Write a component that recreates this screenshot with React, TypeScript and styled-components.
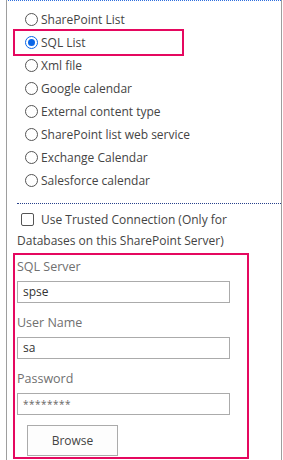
import React from 'react';
import styled, { createGlobalStyle } from 'styled-components';

const GlobalStyle = createGlobalStyle`
  html, body {
    margin: 0;
    padding: 0;
    background: #ffffff;
  }
  body {
    font-family: "Open Sans", "Noto Sans", sans-serif;
    font-size: 12px;
    color: #444444;
  }
`;

const Panel = styled.div`
  margin-left: 6px;
  width: 274px;
  height: 460px;
  overflow: hidden;
  border-left: 1px solid #9e9e9e;
  border-right: 1px solid #9e9e9e;
`;

const SourceList = styled.div`
  margin-left: 1px;
  border-top: 1px dotted #2f6fde;
  padding: 7px 0 11px 0;
  display: flex;
  flex-direction: column;
`;

const RadioRow = styled.label<{ $on?: boolean }>`
  display: flex;
  align-items: center;
  height: 23px;
  width: 167px;
  margin-left: 7px;
  padding-left: 10px;
  box-sizing: border-box;
  gap: 3px;
  white-space: nowrap;
  outline: ${p => (p.$on ? '2px solid #e5085f' : 'none')};
`;

const Radio = styled.span<{ $checked?: boolean }>`
  width: 11px;
  height: 11px;
  border: 1px solid ${p => (p.$checked ? '#0a66e8' : '#555555')};
  border-radius: 50%;
  display: flex;
  align-items: center;
  justify-content: center;
  flex: none;

  &::after {
    content: '';
    width: 7px;
    height: 7px;
    border-radius: 50%;
    background: ${p => (p.$checked ? '#0a66e8' : 'transparent')};
  }
`;

const Options = styled.div`
  margin-left: 10px;
  border-top: 1px dotted #27408b;
  padding-top: 5px;
  display: flex;
  flex-direction: column;
`;

const TrustedRow = styled.label`
  display: block;
  line-height: 21px;
`;

const Checkbox = styled.span`
  display: inline-block;
  width: 11px;
  height: 11px;
  border: 1px solid #555555;
  border-radius: 2px;
  vertical-align: -2px;
  margin: 0 7px 0 4px;
`;

const Credentials = styled.div`
  margin: 2px 0 0 -4px;
  width: 236px;
  box-sizing: border-box;
  border: 2px solid #e5085f;
  padding: 0 0 1px 2px;
`;

const FieldLabel = styled.div`
  color: #707070;
  font-size: 12.5px;
  line-height: 22px;
  padding-top: 1px;
`;

const TextBox = styled.div`
  width: 213px;
  height: 22px;
  box-sizing: border-box;
  border: 1px solid #ababab;
  padding-left: 5px;
  line-height: 20px;
  color: #333333;
  margin: 3px 0 8px;
`;

const MaskedText = styled.span`
  font-size: 10px;
  letter-spacing: 0.5px;
  color: #666666;
`;

const ButtonRow = styled.div`
  padding: 2px 0 0 10px;
  display: flex;
`;

const Button = styled.button`
  width: 91px;
  height: 31px;
  border: 1px solid #ababab;
  background: #fdfdfd;
  font-family: inherit;
  font-size: 12px;
  color: #444444;
  padding: 0;
`;

const sources = [
  'SharePoint List',
  'SQL List',
  'Xml file',
  'Google calendar',
  'External content type',
  'SharePoint list web service',
  'Exchange Calendar',
  'Salesforce calendar',
];

const App = () => {
  return (
    <>
      <GlobalStyle />
      <Panel>
        <SourceList>
          {sources.map(name => (
            <RadioRow key={name} $on={name === 'SQL List'}>
              <Radio $checked={name === 'SQL List'} />
              {name}
            </RadioRow>
          ))}
        </SourceList>

        <Options>
          <TrustedRow>
            <Checkbox />
            Use Trusted Connection (Only for Databases on this SharePoint Server)
          </TrustedRow>

          <Credentials>
            <FieldLabel>SQL Server</FieldLabel>
            <TextBox>spse</TextBox>
            <FieldLabel>User Name</FieldLabel>
            <TextBox>sa</TextBox>
            <FieldLabel>Password</FieldLabel>
            <TextBox>
              <MaskedText>********</MaskedText>
            </TextBox>
            <ButtonRow>
              <Button>Browse</Button>
            </ButtonRow>
          </Credentials>
        </Options>
      </Panel>
    </>
  );
};

export default App;
